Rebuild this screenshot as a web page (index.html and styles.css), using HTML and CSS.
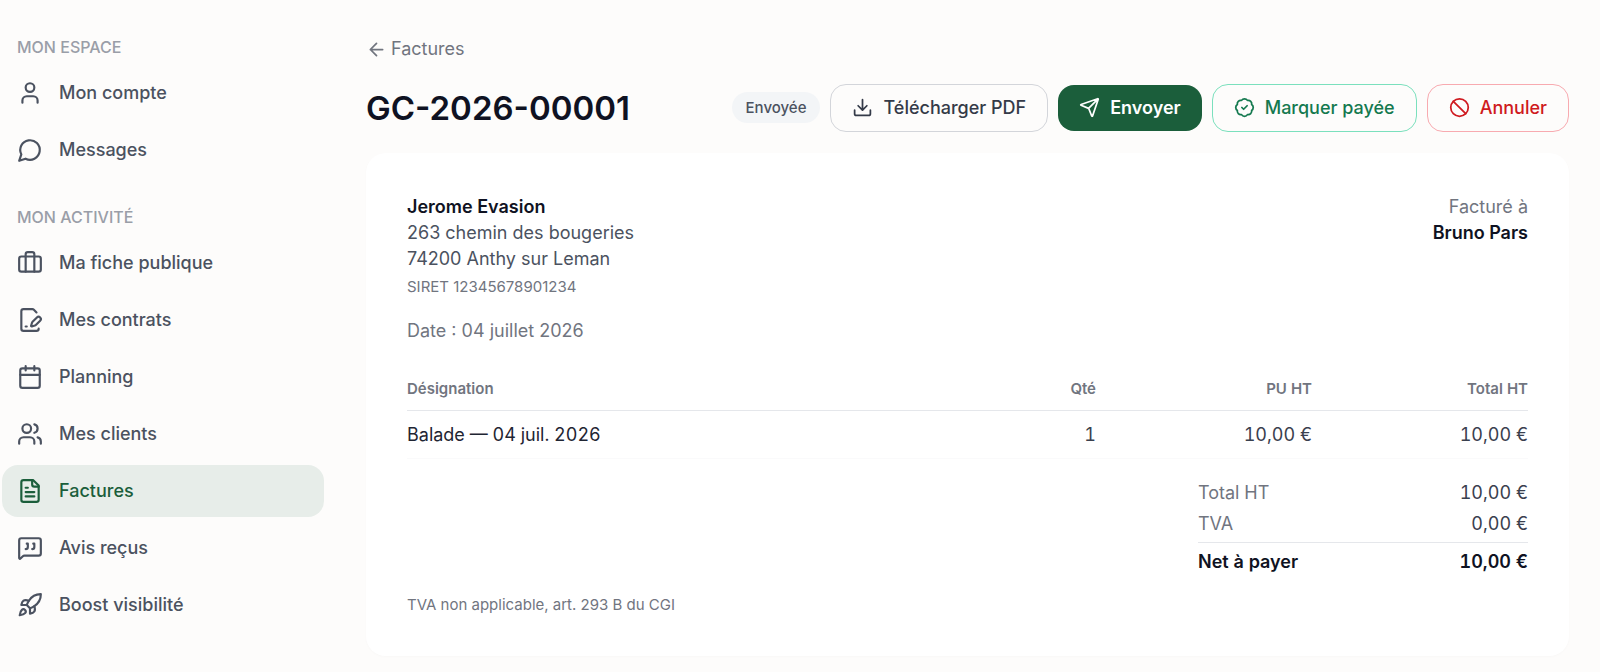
FILE: index.html
```
<!DOCTYPE html>
<html lang="fr">
<head>
  <meta charset="UTF-8" />
  <meta name="viewport" content="width=device-width, initial-scale=1.0"/>
  <title>Facture GC-2026-00001</title>
  <link rel="stylesheet" href="styles.css">
</head>
<body>

  <div class="layout">
    <!-- Menu latéral -->
    <nav class="sidebar">
      <h2>MON ESPACE</h2>
      <ul>
        <li><a href="#">
          <svg class="icon" viewBox="0 0 24 24"><circle cx="12" cy="7" r="4"/><path d="M19 21v-2a4 4 0 0 0-4-4H9a4 4 0 0 0-4 4v2"/></svg>
          Mon compte
        </a></li>
        <li><a href="#">
          <svg class="icon" viewBox="0 0 24 24"><path d="M7.9 20A9 9 0 1 0 4 16.1L2 22Z"/></svg>
          Messages
        </a></li>
      </ul>

      <h2>MON ACTIVITÉ</h2>
      <ul>
        <li><a href="#">
          <svg class="icon" viewBox="0 0 24 24"><path d="M16 20V4a2 2 0 0 0-2-2h-4a2 2 0 0 0-2 2v16"/><rect x="2" y="6" width="20" height="14" rx="2"/></svg>
          Ma fiche publique
        </a></li>
        <li><a href="#">
          <svg class="icon" viewBox="0 0 24 24"><path d="m18 5-2.414-2.414A2 2 0 0 0 14.172 2H6a2 2 0 0 0-2 2v16a2 2 0 0 0 2 2h12a2 2 0 0 0 2-2"/><path d="M21.378 12.626a1 1 0 0 0-3.004-3.004l-4.01 4.012a2 2 0 0 0-.506.854l-.837 2.87a.5.5 0 0 0 .62.62l2.87-.837a2 2 0 0 0 .854-.506z"/><path d="M8 18h1"/></svg>
          Mes contrats
        </a></li>
        <li><a href="#">
          <svg class="icon" viewBox="0 0 24 24"><path d="M8 2v4M16 2v4M3 10h18"/><rect x="3" y="4" width="18" height="18" rx="2"/></svg>
          Planning
        </a></li>
        <li><a href="#">
          <svg class="icon" viewBox="0 0 24 24"><path d="M16 21v-2a4 4 0 0 0-4-4H6a4 4 0 0 0-4 4v2"/><circle cx="9" cy="7" r="4"/><path d="M22 21v-2a4 4 0 0 0-3-3.87M16 3.13a4 4 0 0 1 0 7.75"/></svg>
          Mes clients
        </a></li>
        <li><a href="#" class="active" aria-current="page">
          <svg class="icon" viewBox="0 0 24 24"><path d="M15 2H6a2 2 0 0 0-2 2v16a2 2 0 0 0 2 2h12a2 2 0 0 0 2-2V7Z"/><path d="M14 2v4a2 2 0 0 0 2 2h4M10 9H8M16 13H8M16 17H8"/></svg>
          Factures
        </a></li>
        <li><a href="#">
          <svg class="icon" viewBox="0 0 24 24"><path d="M22 17a2 2 0 0 1-2 2H6.828a2 2 0 0 0-1.414.586l-2.202 2.202A.71.71 0 0 1 2 21.286V5a2 2 0 0 1 2-2h16a2 2 0 0 1 2 2z"/><path d="M14 13a2 2 0 0 0 2-2V8h-1M8 13a2 2 0 0 0 2-2V8H9"/></svg>
          Avis reçus
        </a></li>
        <li><a href="#">
          <svg class="icon" viewBox="0 0 24 24"><path d="M4.5 16.5c-1.5 1.26-2 5-2 5s3.74-.5 5-2c.71-.84.7-2.13-.09-2.91a2.18 2.18 0 0 0-2.91-.09z"/><path d="m12 15-3-3a22 22 0 0 1 2-3.95A12.88 12.88 0 0 1 22 2c0 2.72-.78 7.5-6 11a22.35 22.35 0 0 1-4 2z"/><path d="M9 12H4s.55-3.03 2-4c1.62-1.08 5 0 5 0M12 15v5s3.03-.55 4-2c1.08-1.62 0-5 0-5"/></svg>
          Boost visibilité
        </a></li>
      </ul>
    </nav>

    <main>
      <a href="#" class="back">
        <svg class="icon" viewBox="0 0 24 24"><path d="m12 19-7-7 7-7M19 12H5"/></svg>
        Factures
      </a>

      <header class="page-header">
        <h1>GC-2026-00001</h1>
        <div class="actions">
          <span class="badge">Envoyée</span>
          <button class="btn">
            <svg class="icon" viewBox="0 0 24 24"><path d="M21 15v4a2 2 0 0 1-2 2H5a2 2 0 0 1-2-2v-4M7 10l5 5 5-5M12 15V3"/></svg>
            Télécharger PDF
          </button>
          <button class="btn btn-primary">
            <svg class="icon" viewBox="0 0 24 24"><path d="M14.536 21.686a.5.5 0 0 0 .937-.024l6.5-19a.496.496 0 0 0-.635-.635l-19 6.5a.5.5 0 0 0-.024.937l7.93 3.18a2 2 0 0 1 1.112 1.11zM21.854 2.147l-10.94 10.939"/></svg>
            Envoyer
          </button>
          <button class="btn btn-success">
            <svg class="icon" viewBox="0 0 24 24"><path d="M3.85 8.62a4 4 0 0 1 4.78-4.77 4 4 0 0 1 6.74 0 4 4 0 0 1 4.78 4.78 4 4 0 0 1 0 6.74 4 4 0 0 1-4.77 4.78 4 4 0 0 1-6.75 0 4 4 0 0 1-4.78-4.77 4 4 0 0 1 0-6.76Z"/><path d="m9 12 2 2 4-4"/></svg>
            Marquer payée
          </button>
          <button class="btn btn-danger">
            <svg class="icon" viewBox="0 0 24 24"><circle cx="12" cy="12" r="10"/><path d="m4.9 4.9 14.2 14.2"/></svg>
            Annuler
          </button>
        </div>
      </header>

      <!-- Facture -->
      <section class="card">
        <div class="parties">
          <div class="seller">
            <p class="name">Jerome Evasion</p>
            <p>263 chemin des bougeries</p>
            <p>74200 Anthy sur Leman</p>
            <p class="siret">SIRET 12345678901234</p>
          </div>
          <div class="client">
            <p>Facturé à</p>
            <p class="name">Bruno Pars</p>
          </div>
        </div>

        <p class="date">Date : 04 juillet 2026</p>

        <table class="lines">
          <thead>
            <tr><th>Désignation</th><th>Qté</th><th>PU HT</th><th>Total HT</th></tr>
          </thead>
          <tbody>
            <tr><td>Balade — 04 juil. 2026</td><td>1</td><td>10,00 €</td><td>10,00 €</td></tr>
          </tbody>
        </table>

        <dl class="totals">
          <div><dt>Total HT</dt><dd>10,00 €</dd></div>
          <div><dt>TVA</dt><dd>0,00 €</dd></div>
          <div class="net"><dt>Net à payer</dt><dd>10,00 €</dd></div>
        </dl>

        <p class="mention">TVA non applicable, art. 293 B du CGI</p>
      </section>
    </main>
  </div>

</body>
</html>
```
FILE: styles.css
```
:root {
  --vert: #1b5e3b;
  --vert-clair: #e7ede9;
  --fond: #fdfcfb;
  --blanco: #fff;
  --encre: #0f1222;
  --texte: #4b5260;
  --texte-gris: #71757f;
  --bordure: #e5e7eb;
  --radio: 16px;
}
* { box-sizing: border-box; margin: 0; padding: 0; }
body {
  font-family: Inter, "Liberation Sans", sans-serif;
  font-size: 18px;
  line-height: 26px;
  background: var(--fond);
  color: var(--texte);
}
a { color: inherit; text-decoration: none; }

.icon {
  width: 26px;
  height: 26px;
  flex: none;
  fill: none;
  stroke: currentColor;
  stroke-width: 2;
  stroke-linecap: round;
  stroke-linejoin: round;
}

.layout {
  display: grid;
  grid-template-columns: 322px 1fr;
  gap: 42px;
  padding: 36px 31px 16px 2px;
}

/* Menu latéral */
.sidebar h2 {
  padding: 0 15px;
  margin-bottom: 9px;
  font-size: 16px;
  line-height: 22px;
  font-weight: 500;
  color: #9a9ea8;
}
.sidebar ul {
  list-style: none;
  display: flex;
  flex-direction: column;
  gap: 5px;
  margin-bottom: 30px;
}
.sidebar a {
  display: flex;
  align-items: center;
  gap: 16px;
  padding: 13px 15px;
  border-radius: var(--radio);
  font-weight: 500;
}
.sidebar a.active {
  background: var(--vert-clair);
  color: var(--vert);
}

/* Entête */
.back {
  display: inline-flex;
  align-items: center;
  gap: 4px;
  color: var(--texte-gris);
}
.back .icon,
.btn .icon {
  width: 21px;
  height: 21px;
}
.page-header {
  display: flex;
  align-items: center;
  justify-content: space-between;
  flex-wrap: wrap;
  gap: 10px;
  margin: 17px 0 21px;
}
h1 {
  font-size: 33px;
  line-height: 42px;
  font-weight: 600;
  color: var(--encre);
}
.actions {
  display: flex;
  align-items: center;
  flex-wrap: wrap;
  gap: 10px;
}
.badge {
  padding: 5px 14px;
  border-radius: 16px;
  background: #f3f5f7;
  font-size: 15px;
  line-height: 21px;
  font-weight: 500;
}
.btn {
  display: flex;
  align-items: center;
  gap: 10px;
  padding: 10px 21px;
  border: 1px solid #d3d5da;
  border-radius: var(--radio);
  background: transparent;
  font: inherit;
  font-weight: 500;
  color: #343a48;
  cursor: pointer;
}
.btn-primary {
  border: none;
  background: var(--vert);
  color: var(--blanco);
  font-weight: 600;
}
.btn-success {
  border-color: #7be0bd;
  color: #14794f;
}
.btn-danger {
  border-color: #f8aab0;
  color: #cf1a20;
}

/* Facture */
.card {
  padding: 41px;
  border-radius: 20px;
  background: var(--blanco);
  box-shadow: 0 1px 3px rgba(0,0,0,0.02);
}
.parties {
  display: flex;
  justify-content: space-between;
}
.name {
  font-weight: 600;
  color: var(--encre);
}
.siret {
  margin-top: 4px;
  font-size: 15px;
  line-height: 21px;
  color: var(--texte-gris);
}
.client {
  text-align: right;
}
.client p:first-child,
.date,
.totals dt {
  color: var(--texte-gris);
}
.date {
  margin: 21px 0 34px;
}

.lines {
  width: 100%;
  border-collapse: collapse;
  table-layout: fixed;
  font-variant-numeric: tabular-nums;
}
.lines th {
  width: 216px;
  padding-bottom: 11px;
  border-bottom: 1px solid var(--bordure);
  text-align: right;
  font-size: 15px;
  line-height: 21px;
  font-weight: 600;
  color: var(--texte-gris);
}
.lines td {
  padding: 11px 0 10px;
  border-bottom: 1px solid #fafafb;
  text-align: right;
  color: #3a404e;
}
.lines th:first-child,
.lines td:first-child {
  width: auto;
  text-align: left;
}
.lines td:first-child {
  color: #1f2533;
}

.totals {
  width: 330px;
  margin: 21px 0 19px auto;
  font-variant-numeric: tabular-nums;
}
.totals div {
  display: flex;
  justify-content: space-between;
  margin-bottom: 5px;
}
.totals dd {
  color: #3a404e;
}
.totals .net {
  margin-bottom: 0;
  padding-top: 6px;
  border-top: 1px solid var(--bordure);
  font-weight: 600;
}
.totals .net dt,
.totals .net dd {
  color: var(--encre);
}
.mention {
  font-size: 15px;
  line-height: 21px;
  color: var(--texte-gris);
}
```
